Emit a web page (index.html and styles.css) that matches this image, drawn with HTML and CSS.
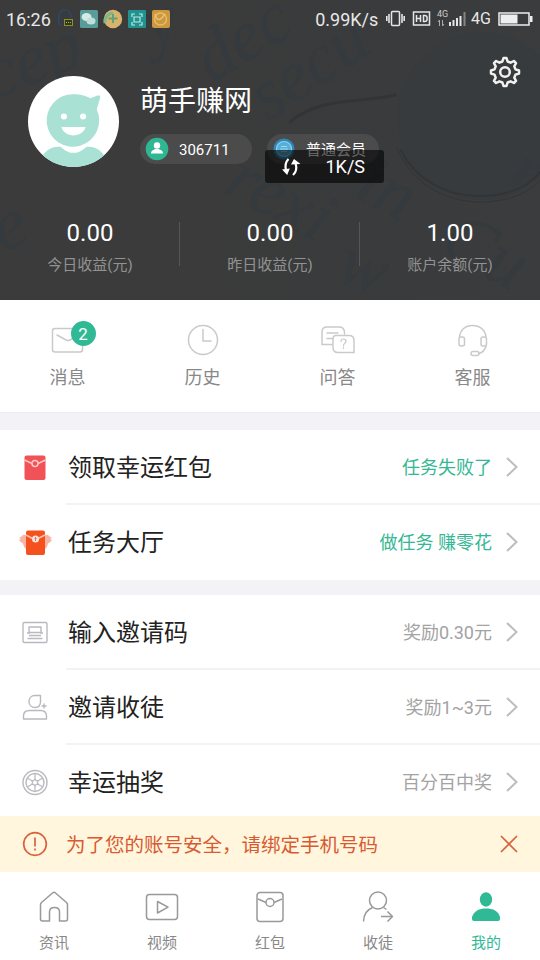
FILE: index.html
```html
<!DOCTYPE html>
<html lang="zh-CN">
<head>
<meta charset="utf-8">
<title>我的</title>
<link rel="stylesheet" href="styles.css">
</head>
<body>
<div class="app">
  <header class="hero">
    <svg class="hero-art" width="540" height="300" viewBox="0 0 540 300" aria-hidden="true">
      <defs>
        <linearGradient id="shade" x1="0" x2="1" y1="0" y2="0"><stop offset=".35" stop-color="#3b3b3b"/><stop offset=".75" stop-color="#393b3c"/><stop offset="1" stop-color="#3a3c3d"/></linearGradient>
      </defs>
      <rect width="540" height="300" fill="url(#shade)"/>
      <circle cx="482" cy="116" r="84" fill="#383b3d"/>
      <g fill="none" stroke="#313538" stroke-linecap="round">
        <path stroke-width="2" d="M401 150c13 28 43 46 78 46 30 0 50-10 61-24"/>
        <path stroke-width="1" d="M397 148c14 34 47 54 83 54 28 0 48-9 60-21"/>
        <path stroke-width="3" d="M290 122c30-26 74-19 105-27"/>
      </g>
      <g class="script">
        <text transform="translate(-6 100) rotate(-22)">cep</text>
        <text transform="translate(152 48) rotate(-18)">y</text>
        <text transform="translate(212 84) rotate(-32)">dec</text>
        <text transform="translate(268 122) rotate(-34)">secu</text>
        <text transform="translate(2 252) rotate(-20)">e</text>
        <text transform="translate(222 192) rotate(28)">rexi</text>
        <text transform="translate(352 196) rotate(28)">in</text>
        <text transform="translate(438 252) rotate(28)">Cu</text>
        <text transform="translate(506 184) rotate(28)">r</text>
        <text transform="translate(334 280) rotate(20)">w</text>
      </g>
    </svg>

    <div class="status">
      <span class="time">16:26</span>
      <div class="notes">
        <svg width="113" height="20" viewBox="0 0 113 20">
          <path d="M3 16C0 13 2 10 2 7c0-8 11-8 12 0v2" fill="none" stroke="#2a4a70" stroke-width="1.500"/>
          <rect x="7.500" y="10.500" width="8" height="6" fill="#333722" stroke="#87912e"/><path d="M9 13.500h5" stroke="#b0b641" stroke-dasharray="1 1"/>
          <rect x="23" y="1" width="18" height="18" rx="1.500" fill="#589d99"/><ellipse cx="29.500" cy="8" rx="5" ry="4" fill="#d9eae5"/><ellipse cx="34" cy="12" rx="4.500" ry="3.500" fill="#bfe0da"/>
          <circle cx="56" cy="10" r="9.200" fill="#d9b36c"/><path d="M48 14c-1-6 4-10 8-10" stroke="#79b98c" stroke-width="3" fill="none"/><path d="M56 5v9M51.500 9.500h9" stroke="#5ca57c" stroke-width="2"/>
          <rect x="71" y="1" width="18" height="18" rx="1" fill="#209390"/><path d="M75 8V5h3m4 0h3v3m0 5v3h-3m-4 0h-3v-3m2-5h6v5h-6z" stroke="#c4e8e4" stroke-width="1.200" fill="none"/>
          <rect x="95" y="1" width="18" height="18" rx="2" fill="#cc983f"/><circle cx="103.500" cy="10" r="6" fill="none" stroke="#e8ba65" stroke-width="1.500"/><path d="M98 5c2 8 5 7 10 0" fill="none" stroke="#edc475" stroke-width="1.300"/>
        </svg>
      </div>
      <span class="rate">0.99K/s</span>
      <svg class="signals" width="81" height="24" viewBox="0 0 81 24" fill="none" stroke="#e6e6e6">
        <rect x="5.500" y="4.500" width="8" height="14" rx="1" stroke-width="1.500"/><path stroke-width="1.600" d="M3 7v9M.8 9v5M16 7v9M18.200 9v5"/>
        <rect x="27.500" y="5" width="16" height="13" stroke-width="1.500"/>
        <path stroke-width="1.500" d="M30.500 8v7m0-3.500h4M34.500 8v7M37.500 8.500v6h1.400c3 0 3-6 0-6z"/>
        <text class="net" x="51" y="10">4G</text>
        <path stroke-width="1" stroke="#aaa" d="M53.500 13v6m-1.500-4 1.500-2M56.500 13v6m1.500-2-1.500 2"/>
        <path stroke-width="2" d="M64 19v-4M67.500 19v-6M71 19v-8M74.500 19v-10"/><path stroke="#858585" stroke-width="2" d="M78.500 19V5"/>
      </svg>
      <span class="four">4G</span>
      <svg class="battery" width="35" height="14" viewBox="0 0 35 14"><path fill="none" stroke="#eee" stroke-width="1.500" d="M1 1h30v12H1z"/><path fill="#eee" d="M2.500 2.500h17v9h-17zM32 4h2.500v6H32z"/></svg>
    </div>

    <div class="profile">
      <svg class="avatar" width="91" height="91" viewBox="0 0 90 90">
        <defs><clipPath id="face"><circle cx="45" cy="45" r="45"/></clipPath></defs>
        <g clip-path="url(#face)">
          <rect width="90" height="90" fill="#fff"/>
          <path fill="#a9e1d5" d="M12 95V83c4-8 10-14 20-13 8 7 18 7 26 0 10-1 16 5 20 13v12z"/>
          <path fill="#a9e1d5" d="M45 18c7 0 11 1 17 4l6-2.500c4-1 4 1 2.500 5L68 33a26 26 0 1 1-23-15z"/>
          <path d="M34 70c3 2 4 5 11 5s8-3 11-5" fill="none" stroke="#fff" stroke-width="2"/>
          <circle cx="35.500" cy="40" r="3" fill="#fff"/><circle cx="54.500" cy="40" r="3" fill="#fff"/>
          <path fill="#fff" d="M33 50.500h24c-3 11-21 11-24 0z"/>
        </g>
      </svg>
      <div class="who">
        <div class="name">萌手赚网</div>
        <div class="pills">
          <div class="pill">
            <svg width="24" height="24" viewBox="0 0 24 24"><circle cx="12" cy="12" r="11.300" fill="#2fb794"/><circle cx="12" cy="8.500" r="3.200" fill="#fff"/><path fill="#fff" d="M6 16.500c0-6 12-6 12 0z"/></svg>
            <span>306711</span>
          </div>
          <div class="pill">
            <svg width="24" height="24" viewBox="0 0 24 24"><circle cx="12" cy="12" r="10.500" fill="#3188b8"/><circle cx="12" cy="12" r="7.500" fill="#57afd8" stroke="#8fd2ef" stroke-width="1.200"/><path d="M9 9.500h6M8 12h8M9 14.500h6" stroke="#9cd8f0" stroke-width="1.200"/></svg>
            <span>普通会员</span>
          </div>
        </div>
      </div>
      <svg class="gear" width="32" height="32" viewBox="0 0 32 32" fill="none" stroke="#f1f1f1" stroke-width="2.500" stroke-linejoin="round">
        <path d="M13.400 5.500 14.500 2h3l1.100 3.500 3 1.200 3.300-1.700 2.100 2.100-1.700 3.300 1.200 3L30 14.500v3l-3.500 1.100-1.200 3 1.700 3.300-2.100 2.100-3.300-1.700-3 1.200-1.100 3.500h-3l-1.100-3.500-3-1.200L7.100 27 5 24.900l1.700-3.300-1.200-3L2 17.500v-3l3.500-1.100 1.200-3L5 7.100 7.100 5l3.300 1.700z"/><circle cx="16" cy="16" r="4.800"/>
      </svg>
    </div>

    <div class="speed">
      <svg width="20" height="18" viewBox="0 0 20 18"><path fill="none" stroke="#fff" stroke-width="2.200" d="M7.500 1C4.500 4 3.800 8 5 13M12 17c3.500-3 4-7 2.500-12"/><path fill="#fff" d="m1 11.500 7.800-1L6.200 17zM10 6.500 13 1l6.500 5z"/></svg>
      <span>1K/S</span>
    </div>

    <div class="stats">
      <div class="stat"><b>0.00</b><span>今日收益(元)</span></div>
      <div class="stat"><b>0.00</b><span>昨日收益(元)</span></div>
      <div class="stat"><b>1.00</b><span>账户余额(元)</span></div>
    </div>
  </header>

  <section class="menu">
    <div class="entry">
      <div class="entry-icon">
        <svg width="36" height="36" viewBox="0 0 36 36"><rect x="2.500" y="6.500" width="30" height="23.500" rx="2.500"/><path d="m7 13 9 5q2 1 4 0l9-5"/></svg>
        <span class="badge">2</span>
      </div>
      <span>消息</span>
    </div>
    <div class="entry">
      <div class="entry-icon"><svg width="36" height="36" viewBox="0 0 36 36"><circle cx="18" cy="18" r="14.500"/><path d="M18 7.500V19h8"/></svg></div>
      <span>历史</span>
    </div>
    <div class="entry">
      <div class="entry-icon"><svg width="36" height="36" viewBox="0 0 36 36"><path d="M12 22.500H2V10q0-5 5-5h12q5 0 5.500 5v2M7 11h11M7 16.500h5"/><path d="M16 13.500h13q5 0 5 5v12H18q-5 0-5-5v-9q0-3 3-3z"/><path stroke-width="1.200" d="M21 19.500q0-2.500 2.500-2.500t2.500 2.200q0 1.300-1.500 2.300-1 .6-1 2.500m0 1.500v1"/></svg></div>
      <span>问答</span>
    </div>
    <div class="entry">
      <div class="entry-icon"><svg width="36" height="36" viewBox="0 0 36 36"><path d="M4.500 15.500C5 8 10 3.500 17.500 3.500S30.500 8 31 15.500m0 8.500c-1 4-3 6.500-7 7.500"/><rect x="4" y="15" width="5.500" height="9" rx="2"/><rect x="26" y="15" width="5.500" height="9" rx="2"/><rect x="16" y="29.500" width="8" height="4" rx="2"/></svg></div>
      <span>客服</span>
    </div>
  </section>

  <section class="list tasks">
    <div class="row">
      <svg class="row-icon" width="36" height="36" viewBox="0 0 36 36"><rect x="7.500" y="5.500" width="21" height="24.500" rx="2" fill="#f05257"/><path d="M7.500 10 15 13.500m13.500-3.500L21 13.500" stroke="#ffc9c4" stroke-width="1.500"/><circle cx="18" cy="13.500" r="3" fill="#f05257" stroke="#ffc9c4" stroke-width="1.500"/></svg>
      <div class="row-body"><span class="title">领取幸运红包</span><span class="hint green">任务失败了</span><svg class="chev" width="14" height="22" viewBox="0 0 14 22"><path d="m2 2 9.500 9L2 20"/></svg></div>
    </div>
    <div class="row">
      <svg class="row-icon" width="36" height="36" viewBox="0 0 36 36"><path fill="#f7b6a4" d="M9 10q-3-1-4 1l-3 2 2 1-2 1q2 3 4 3.500.500 4 3 5.500zM28 10q3-1 4 1l3 2-2 1 2 1q-2 3-4 3.500-.500 4-3 5.500z"/><rect x="9" y="5.500" width="19" height="24.500" rx="2" fill="#f5511e"/><path d="m9 10 6.500 3.500M28 10 21 13.500" stroke="#ffc3ad" stroke-width="1.500"/><circle cx="18.500" cy="14" r="3.500" fill="#ffe3d8"/><path d="M18.500 12v4m-1-3 1 1 1-1" stroke="#c77" fill="none"/></svg>
      <div class="row-body"><span class="title">任务大厅</span><span class="hint green">做任务 赚零花</span><svg class="chev" width="14" height="22" viewBox="0 0 14 22"><path d="m2 2 9.500 9L2 20"/></svg></div>
    </div>
  </section>

  <section class="list more">
    <div class="row">
      <svg class="row-icon line" width="36" height="36" viewBox="0 0 36 36"><rect x="6" y="7.500" width="24" height="20" rx="1.500"/><path d="M12 12h12v5.500H12zM10 18h3m10 0h3M12 20.500h12M10.500 23.500h15"/></svg>
      <div class="row-body"><span class="title">输入邀请码</span><span class="hint">奖励0.30元</span><svg class="chev" width="14" height="22" viewBox="0 0 14 22"><path d="m2 2 9.500 9L2 20"/></svg></div>
    </div>
    <div class="row">
      <svg class="row-icon line" width="36" height="36" viewBox="0 0 36 36"><path d="M23.500 5.500H18c-4 0-6 3-6 6 0 3.500 2.500 6 6 6s5.500-2.500 5.500-6zM27 13.500v5m-2.500-2.500h5M6.500 29v-3q0-5.500 6-5.500h11q6 0 6 5.500v3z"/></svg>
      <div class="row-body"><span class="title">邀请收徒</span><span class="hint">奖励1~3元</span><svg class="chev" width="14" height="22" viewBox="0 0 14 22"><path d="m2 2 9.500 9L2 20"/></svg></div>
    </div>
    <div class="row">
      <svg class="row-icon line" width="36" height="36" viewBox="0 0 36 36"><circle cx="18" cy="17.500" r="12"/><circle cx="18" cy="17.500" r="9"/><path stroke-width="1.200" d="M18 8.500v5M18 21.500v5M10.200 13l4.300 2.500M21.500 19.500l4.300 2.500M25.800 13l-4.300 2.500M14.500 19.500 10.200 22M18 13.500l1.200 2.200 2.300-.2-1.200 2 1.200 2-2.300-.2-1.200 2.200-1.200-2.200-2.300.2 1.200-2-1.200-2 2.300.2z"/></svg>
      <div class="row-body"><span class="title">幸运抽奖</span><span class="hint">百分百中奖</span><svg class="chev" width="14" height="22" viewBox="0 0 14 22"><path d="m2 2 9.500 9L2 20"/></svg></div>
    </div>
  </section>

  <div class="alert">
    <svg width="26" height="26" viewBox="0 0 26 26"><circle cx="13" cy="13" r="11.300"/><path d="M13 6.500v9m0 2v2"/></svg>
    <span>为了您的账号安全，请绑定手机号码</span>
    <svg width="18" height="18" viewBox="0 0 18 18"><path d="m1 1 16 16M17 1 1 17"/></svg>
  </div>

  <nav class="tabs">
    <div class="tab"><svg width="36" height="36" viewBox="0 0 36 36"><path d="M4.500 16q0-1.500 1-2.500L16.500 4q1.500-1.500 3 0l11 9.500q1 1 1 2.500v14q0 2-2 2h-6V23q0-4.500-5-4.500t-5 4.500v9h-7q-2 0-2-2z"/></svg><span>资讯</span></div>
    <div class="tab"><svg width="36" height="36" viewBox="0 0 36 36"><rect x="2.500" y="5.500" width="31" height="25" rx="3"/><path d="M13.500 12.500v11.500L24 18.200z"/></svg><span>视频</span></div>
    <div class="tab"><svg width="36" height="36" viewBox="0 0 36 36"><rect x="5" y="3.500" width="26" height="29" rx="3"/><path d="m6 10 8 3.500M30 10l-8 3.500"/><circle cx="18" cy="13.500" r="4"/></svg><span>红包</span></div>
    <div class="tab"><svg width="36" height="36" viewBox="0 0 36 36"><circle cx="18" cy="11.500" r="8.500"/><path d="M3.500 32.500c0-7 3-11.500 9-14M23.500 18.500l3 2M21 27.500h11.500m-5-5 5 5-5 5"/></svg><span>收徒</span></div>
    <div class="tab on"><svg width="36" height="36" viewBox="0 0 36 36"><ellipse cx="18" cy="10.500" rx="6.200" ry="7.200"/><path d="M4 30v-2c2-6 7-8.500 14-8.500S30.500 22 32 28v2q0 2-2 2H6q-2 0-2-2z"/></svg><span>我的</span></div>
  </nav>
</div>
</body>
</html>
```

FILE: styles.css
```css
* { box-sizing: border-box; }

body {
  margin: 0;
  font-family: Roboto, "Noto Sans CJK SC", sans-serif;
  color: #222;
  background: #f2f2f7;
}

svg { display: block; flex: none; }

.app {
  width: 540px;
  height: 960px;
  display: flex;
  flex-direction: column;
  overflow: hidden;
}

/* header */
.hero {
  position: relative;
  height: 300px;
  flex: none;
  background: #3b3b3b;
  color: #fff;
}
.hero-art { position: absolute; inset: 0; }
.script {
  font-family: "Liberation Serif", serif;
  font-style: italic;
  font-size: 72px;
  fill: #343a3d;
}
.status, .profile, .stats { position: relative; }

.status {
  height: 38px;
  display: flex;
  align-items: center;
  padding: 0 7px 0 6px;
  font-size: 18px;
  line-height: 38px;
  color: #e8e8e8;
}
.time { width: 51px; padding-top: 2px; }
.notes { width: 259px; }
.rate { width: 71px; padding-top: 2px; }
.net { font-size: 9px; fill: #ccc; stroke: none; }
.four { width: 31px; padding-left: 4px; font-size: 16px; }

.profile {
  display: flex;
  align-items: flex-start;
  padding: 18px 19px 0 28px;
}
.avatar { margin-top: 20px; }
.who { flex: 1; margin-left: 21px; padding-top: 26px; }
.name { font-size: 28px; line-height: 40px; height: 52px; }
.pills { display: flex; gap: 15px; }
.pill {
  width: 112px;
  height: 30px;
  border-radius: 15px;
  background: #4b4b4b;
  display: flex;
  align-items: center;
  gap: 10px;
  padding-left: 5px;
  font-size: 15px;
  line-height: 30px;
  white-space: nowrap;
}
.pill span { padding-top: 1px; }
.gear { margin-left: -20px; }

.speed {
  position: absolute;
  left: 265px;
  top: 150px;
  width: 119px;
  height: 33px;
  border-radius: 3px;
  background: rgba(0, 0, 0, .6);
  display: flex;
  align-items: center;
  justify-content: space-between;
  padding: 0 19px 0 16px;
  font-size: 18px;
}

.stats { display: flex; margin-top: 51px; }
.stat {
  flex: 1;
  height: 62px;
  display: flex;
  flex-direction: column;
  align-items: center;
  position: relative;
}
.stat + .stat::before {
  content: "";
  position: absolute;
  left: -1px;
  top: 4px;
  width: 1px;
  height: 44px;
  background: #565656;
}
.stat b { font-size: 24px; line-height: 30px; font-weight: 400; }
.stat span { font-size: 15px; line-height: 22px; margin-top: 6px; color: #929292; }

/* shortcuts */
.menu {
  height: 113px;
  flex: none;
  display: flex;
  background: #fff;
  border-bottom: 1px solid #ececf0;
}
.entry {
  flex: 1;
  display: flex;
  flex-direction: column;
  align-items: center;
  padding-top: 22px;
  font-size: 18px;
  line-height: 26px;
  color: #888;
}
.entry-icon { position: relative; margin-bottom: 7px; }
.entry-icon svg { fill: none; stroke: #cacaca; stroke-width: 1.5; stroke-linecap: round; }
.badge {
  position: absolute;
  left: 21px;
  top: -1px;
  width: 25px;
  height: 25px;
  border-radius: 50%;
  background: #2fb995;
  color: #fff;
  font-size: 17px;
  line-height: 26px;
  text-align: center;
}

/* rows */
.list { background: #fff; }
.tasks { margin-top: 17px; height: 150px; flex: none; }
.more { margin-top: 15px; flex: 1; min-height: 0; overflow: hidden; }
.row {
  height: 75px;
  display: flex;
  align-items: center;
  padding-left: 17px;
}
.row-icon { margin-right: 13px; }
.row-icon.line { fill: none; stroke: #b9b9bf; stroke-width: 1.4; stroke-linejoin: round; }
.row-body {
  flex: 1;
  height: 75px;
  display: flex;
  align-items: center;
  padding: 1px 21px 0 2px;
  border-bottom: 2px solid #f3f3f4;
}
.row:last-child .row-body { border-bottom-color: transparent; }
.title { font-size: 24px; line-height: 36px; padding-top: 2px; }
.hint { margin-left: auto; margin-right: 13px; padding-top: 2px; font-size: 18px; line-height: 26px; color: #a3a3a3; }
.hint.green { color: #36b794; }
.chev { fill: none; stroke: #bdbdbd; stroke-width: 2; }

/* security notice */
.alert {
  height: 56px;
  flex: none;
  display: flex;
  align-items: center;
  padding: 0 22px 1px;
  background: #fff6dd;
  color: #d95a31;
  font-size: 19.5px;
}
.alert svg { fill: none; stroke: #d9623d; stroke-width: 1.7; }
.alert span { flex: 1; margin-left: 18px; padding-bottom: 1px; }

/* bottom tabs */
.tabs { height: 88px; flex: none; display: flex; background: #fff; }
.tab {
  flex: 1;
  display: flex;
  flex-direction: column;
  align-items: center;
  padding-top: 17px;
  font-size: 15px;
  line-height: 22px;
  color: #888;
}
.tab svg { fill: none; stroke: #999; stroke-width: 1.5; stroke-linejoin: round; margin-bottom: 7px; }
.tab.on { color: #2fb995; }
.tab.on svg { fill: #2fb995; stroke: none; }
```
